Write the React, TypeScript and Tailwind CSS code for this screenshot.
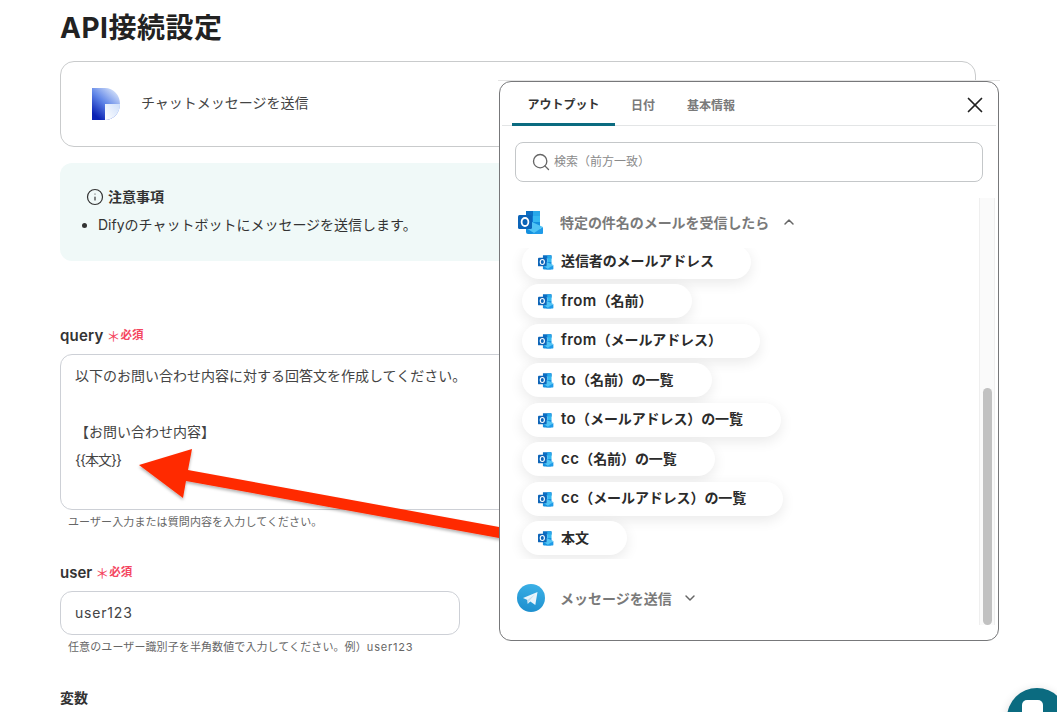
import React from 'react';
import { ChevronDown, ChevronUp, Info, Search, X } from 'lucide-react';

const FONT = "font-['Inter','Noto_Sans_CJK_JP',sans-serif]";

const OUTPUTS = [
    { latin: '', label: '送信者のメールアドレス', width: 'w-[229px]' },
    { latin: 'from', label: '（名前）', width: 'w-[170px]' },
    { latin: 'from', label: '（メールアドレス）', width: 'w-[238px]' },
    { latin: 'to', label: '（名前）の一覧', width: 'w-[190px]' },
    { latin: 'to', label: '（メールアドレス）の一覧', width: 'w-[259px]' },
    { latin: 'cc', label: '（名前）の一覧', width: 'w-[193px]' },
    { latin: 'cc', label: '（メールアドレス）の一覧', width: 'w-[261px]' },
    { latin: '', label: '本文', width: 'w-[105px]' },
];

function OutlookIcon({ className }: { className: string }) {
    return (
        <svg viewBox="0 0 26 26" className={className}>
            <path d="M8 2h13a1 1 0 0 1 1 1v4H8z" fill="#0a6fc4" />
            <path d="M15 2h6a1 1 0 0 1 1 1v5h-7z" fill="#28a8ea" />
            <path d="M8 7h7v6H8z" fill="#0f78d4" />
            <path d="M15 7h7v6h-7z" fill="#35b8f1" />
            <path d="M8 13h14v10a2 2 0 0 1-2 2H10a2 2 0 0 1-2-2z" fill="#1490df" />
            <path d="M13 25l12-7v6a1 1 0 0 1-1 1z" fill="#1f9be8" />
            <path d="M14 13l11 5-9 6-8-5z" fill="#50c4f5" />
            <rect x="0" y="6" width="14" height="14" rx="1.5" fill="#0c64b8" />
            <ellipse cx="7" cy="13" rx="3.4" ry="4" fill="none" stroke="#ffffff" strokeWidth="1.8" />
        </svg>
    );
}

function TelegramIcon() {
    return (
        <svg viewBox="0 0 28 28" className="w-[28px] h-[28px]">
            <defs>
                <linearGradient id="tg" x1="0.6" y1="0" x2="0.4" y2="1">
                    <stop offset="0" stopColor="#3bb0e6" />
                    <stop offset="1" stopColor="#1d8fce" />
                </linearGradient>
            </defs>
            <circle cx="14" cy="14" r="14" fill="url(#tg)" />
            <path d="M6 14l14.5-6-2.2 13-5-3.6-2.5 2.4-.4-3.8z" fill="#e8f4fb" />
            <path d="M10.4 16l7.4-5.6-5.6 6.7-1.4 3z" fill="#c4dfef" />
        </svg>
    );
}

function DifyLogo() {
    return (
        <svg viewBox="0 0 28 32" className="w-[28px] h-[32px]">
            <defs>
                <linearGradient id="dfa" x1="0.3" y1="1" x2="1" y2="0.1">
                    <stop offset="0" stopColor="#0a22b4" />
                    <stop offset="0.45" stopColor="#5f85e8" />
                    <stop offset="1" stopColor="#e6effc" />
                </linearGradient>
                <linearGradient id="dfb" x1="0" y1="1" x2="1" y2="0.2">
                    <stop offset="0" stopColor="#ffffff" />
                    <stop offset="1" stopColor="#d3e2fb" />
                </linearGradient>
            </defs>
            <path d="M0 0h13c8.500 0 15 7 15 16s-6.500 16-15 16H0z" fill="url(#dfa)" />
            <path d="M13 16h15c0 9-6.500 16-15 16z" fill="url(#dfb)" />
        </svg>
    );
}

function Required() {
    return (
        <span className="text-[11.5px] font-bold text-[#f4465f] flex items-center">
            <span className="text-[14px] font-normal leading-none">＊</span>
            必須
        </span>
    );
}

function OutputPopup() {
    return (
        <div className="absolute left-[499px] top-[81px] z-20 w-[500px] h-[560px] bg-white border border-[#77787a] rounded-[12px] overflow-hidden">
            <div className="flex items-start h-[44px] mx-[2px] border-b border-[#e3e5e6] relative">
                <div className="ml-[10px] w-[103px] h-[44px] pt-[4px] border-b-[3px] border-[#0b6b80] flex items-center justify-center text-[12px] font-bold text-[#333]">
                    アウトプット
                </div>
                <div className="ml-[16px] h-[44px] pt-[4px] flex items-center text-[12px] font-bold text-[#7a7a7a]">日付</div>
                <div className="ml-[32px] h-[44px] pt-[4px] flex items-center text-[12px] font-bold text-[#7a7a7a]">基本情報</div>
                <X className="absolute right-[8px] top-[10px] text-[#222]" size={26} strokeWidth={1.6} />
            </div>

            <div className="mt-[16px] mx-[15px] h-[40px] w-[468px] border border-[#c4c7c9] rounded-[8px] flex items-center pl-[15px] gap-[3px]">
                <Search className="text-[#666]" size={20} strokeWidth={1.6} />
                <span className="text-[12px] text-[#8a8a8a]">検索（前方一致）</span>
            </div>

            <div className="relative mt-[16px] h-[427px]">
                <div className="absolute right-[3px] top-0 bottom-0 w-[16px] bg-[#fafafa] border-l border-r border-[#efefef]">
                    <div className="absolute left-[3px] top-[190px] bottom-0 w-[9px] rounded-full bg-[#c1c1c1]" />
                </div>

                <div className="flex items-center h-[50px] pb-[2px] pl-[18px]">
                    <OutlookIcon className="w-[26px] h-[26px]" />
                    <span className="ml-[16px] text-[14px] font-bold text-[#7a7a7a] tracking-[-0.05px]">特定の件名のメールを受信したら</span>
                    <ChevronUp className="ml-[12px] text-[#666]" size={16} strokeWidth={2.2} />
                </div>

                <div className="h-[311px] overflow-hidden pl-[22px]">
                    <div className="flex flex-col gap-[5.5px] mt-[-3.5px] pb-[10px]">
                        {OUTPUTS.map((item) => (
                            <div
                                key={item.latin + item.label}
                                className={`${item.width} h-[34px] shrink-0 rounded-full bg-white shadow-[0_4px_14px_rgba(0,0,0,0.09)] flex items-center pl-[16px] gap-[7px]`}
                            >
                                <OutlookIcon className="w-[16px] h-[16px]" />
                                <span className="text-[14px] font-semibold text-[#2b2b2b] whitespace-nowrap tracking-[-0.1px]">
                                    <span className="text-[15px] font-semibold tracking-[0.4px]">{item.latin}</span>
                                    {item.label}
                                </span>
                            </div>
                        ))}
                    </div>
                </div>

                <div className="flex items-center mt-[25px] pl-[17px]">
                    <TelegramIcon />
                    <span className="ml-[15px] text-[14px] font-bold text-[#7a7a7a]">メッセージを送信</span>
                    <ChevronDown className="ml-[10px] text-[#666]" size={16} strokeWidth={2.2} />
                </div>
            </div>
        </div>
    );
}

function RedArrow() {
    return (
        <svg className="absolute left-0 top-0 z-10 pointer-events-none" width="520" height="560" viewBox="0 0 520 560">
            <defs>
                <filter id="arrowShadow" x="-5%" y="-10%" width="110%" height="125%">
                    <feDropShadow dx="0" dy="2" stdDeviation="1.500" floodColor="#000000" floodOpacity="0.3" />
                </filter>
            </defs>
            <path d="M139 465L192 449 188 470 510 529 510 540 186 481 183 498z" fill="#ff2a00" filter="url(#arrowShadow)" />
        </svg>
    );
}

export default function App() {
    return (
        <div className={`relative w-[1057px] h-[712px] overflow-hidden bg-white text-[#333] ${FONT}`}>
            <div className="w-[916px] ml-[60px]">
                <h1 className="text-[28px] leading-[40px] mt-[8px] mb-[13px] font-bold text-[#222] tracking-[0.5px]">API接続設定</h1>

                <div className="h-[86px] border border-[#c9cbcc] rounded-[14px] flex items-center pl-[31px]">
                    <DifyLogo />
                    <span className="ml-[21px] text-[14px] mb-[4px] text-[#444]">チャットメッセージを送信</span>
                </div>

                <div className="mt-[16px] h-[98px] bg-[#f0f9f8] rounded-[12px] pt-[24px] pl-[26px]">
                    <div className="flex items-center gap-[4px] text-[14px] font-bold text-[#333] leading-[20px]">
                        <Info size={18} strokeWidth={1.6} />
                        注意事項
                    </div>
                    <ul className="list-disc ml-[12px] mt-[8px] text-[14px] leading-[20px] text-[#333]">
                        <li>Difyのチャットボットにメッセージを送信します。</li>
                    </ul>
                </div>

                <div className="mt-[65px] flex items-center gap-[3px] h-[20px]">
                    <span className="text-[15px] font-semibold text-[#333] tracking-[0.2px]">query</span>
                    <Required />
                </div>
                <div className="mt-[8px] h-[156px] border border-[#cdd0d6] rounded-[12px] pt-[6.500px] pl-[14px] text-[14px] leading-[28px] text-[#444]">
                    <div>以下のお問い合わせ内容に対する回答文を作成してください。</div>
                    <div className="h-[28px]" />
                    <div>【お問い合わせ内容】</div>
                    <div className="tracking-[-1px]">{'{{本文}}'}</div>
                </div>
                <p className="mt-[4px] ml-[8px] text-[11px] leading-[16px] text-[#666] tracking-[0.1px]">ユーザー入力または質問内容を入力してください。</p>

                <div className="mt-[33px] flex items-center gap-[3px] h-[20px]">
                    <span className="text-[15px] font-semibold text-[#333]">user</span>
                    <Required />
                </div>
                <div className="mt-[8px] w-[400px] h-[44px] border border-[#cdd0d6] rounded-[12px] pl-[14px] pb-[2px] flex items-center text-[14px] text-[#444] tracking-[0.8px]">user123</div>
                <p className="mt-[4px] ml-[8px] text-[11px] leading-[16px] text-[#666] tracking-[0.1px]">
                    任意のユーザー識別子を半角数値で入力してください。例）<span className="tracking-[0.8px]">user123</span>
                </p>

                <div className="mt-[33px] text-[14px] font-bold text-[#333] leading-[20px]">変数</div>
            </div>

            <RedArrow />
            <div className="absolute left-[498px] top-[80px] z-10 w-[502px] h-[1px] bg-[#e4e4e4]" />
            <OutputPopup />

            <button className="absolute left-[1007px] top-[688px] w-[60px] h-[60px] rounded-full bg-[#0b6b80] shadow-[0_2px_10px_rgba(0,0,0,0.15)] flex justify-center pt-[12px] pr-[10px]">
                <span className="block w-[21px] h-[21px] bg-white rounded-[5px]" />
            </button>
        </div>
    );
}
